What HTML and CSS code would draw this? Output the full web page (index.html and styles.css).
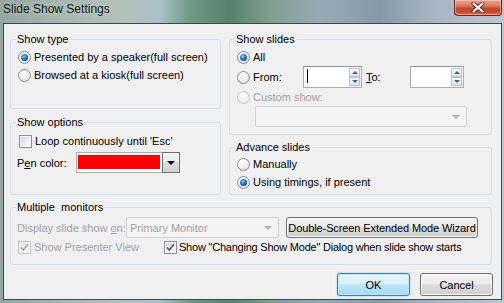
FILE: index.html
```html
<!DOCTYPE html>
<html lang="en">
<head>
    <meta charset="UTF-8">
    <title>Slide Show Settings</title>
    <link rel="stylesheet" href="styles.css">
</head>
<body>
    <div class="window">
        <div class="titlebar">
            <span class="title">Slide Show Settings</span>
            <span class="close-btn">
                <svg width="16" height="11" viewBox="0 0 16 11">
                    <path d="M3.5 1.5 L12.5 9.5 M12.5 1.5 L3.5 9.5" stroke="#5a2a22" stroke-width="4" stroke-linecap="round" fill="none"/>
                    <path d="M3.5 1.5 L12.5 9.5 M12.5 1.5 L3.5 9.5" stroke="#ffffff" stroke-width="2.2" stroke-linecap="round" fill="none"/>
                </svg>
            </span>
        </div>

        <div class="client">
            <div class="columns">
                <div class="col">
                    <fieldset class="group show-type">
                        <legend>Show type</legend>
                        <div class="opt"><span class="radio on"></span>Presented by a speaker(full screen)</div>
                        <div class="opt"><span class="radio"></span>Browsed at a kiosk(full screen)</div>
                    </fieldset>

                    <fieldset class="group show-options">
                        <legend>Show options</legend>
                        <div class="opt"><span class="check"></span>Loop continuously until 'Esc'</div>
                        <div class="opt pen-row">
                            <span class="pen-label">P<u>e</u>n color:</span>
                            <span class="color-pick">
                                <span class="swatch"></span>
                                <span class="drop-btn"><span class="tri-black"></span></span>
                            </span>
                        </div>
                    </fieldset>
                </div>

                <div class="col">
                    <fieldset class="group show-slides">
                        <legend>Show slides</legend>
                        <div class="opt"><span class="radio on"></span>All</div>
                        <div class="opt from-row">
                            <span class="radio"></span>
                            <span class="from-label">From:</span>
                            <span class="spin spin-from">
                                <span class="spin-field"><span class="caret"></span></span>
                                <span class="spin-btns">
                                    <span class="spin-btn"><span class="tri-up"></span></span>
                                    <span class="spin-btn"><span class="tri-down"></span></span>
                                </span>
                            </span>
                            <span class="to-label"><u>T</u>o:</span>
                            <span class="spin spin-to">
                                <span class="spin-field"></span>
                                <span class="spin-btns">
                                    <span class="spin-btn"><span class="tri-up"></span></span>
                                    <span class="spin-btn"><span class="tri-down"></span></span>
                                </span>
                            </span>
                        </div>
                        <div class="opt disabled"><span class="radio off"></span>Custom show:</div>
                        <div class="combo custom-combo"><span></span><span class="tri-gray"></span></div>
                    </fieldset>

                    <fieldset class="group advance">
                        <legend>Advance slides</legend>
                        <div class="opt"><span class="radio"></span>Manually</div>
                        <div class="opt"><span class="radio on"></span>Using timings, if present</div>
                    </fieldset>
                </div>
            </div>

            <fieldset class="group monitors">
                <legend>Multiple&nbsp; monitors</legend>
                <div class="opt monitor-row">
                    <span class="display-label disabled">Display slide show <u>o</u>n:</span>
                    <span class="combo monitor-combo"><span>Primary Monitor</span><span class="tri-gray"></span></span>
                    <span class="btn wizard-btn">Double-Screen Extended Mode Wizard</span>
                </div>
                <div class="opt">
                    <span class="presenter disabled">
                        <span class="check off">
                            <svg width="11" height="11" viewBox="0 0 11 11"><path d="M2 5.5 L4.3 8 L9 2.3" stroke="#a6a6a6" stroke-width="1.7" fill="none"/></svg>
                        </span>
                        Show Presenter View
                    </span>
                    <span class="check">
                        <svg width="11" height="11" viewBox="0 0 11 11"><path d="M2 5.5 L4.3 8 L9 2.3" stroke="#3e5a9c" stroke-width="1.7" fill="none"/></svg>
                    </span>
                    <span class="mode-text">Show "Changing Show Mode" Dialog when slide show starts</span>
                </div>
            </fieldset>

            <div class="actions">
                <span class="btn btn-default">OK</span>
                <span class="btn">Cancel</span>
            </div>
        </div>
    </div>
</body>
</html>
```

FILE: styles.css
```css
* {
    box-sizing: border-box;
}

body {
    margin: 0;
    font-family: "Liberation Sans", Arial, sans-serif;
    font-size: 11px;
    color: #000;
    overflow: hidden;
}

.window {
    width: 504px;
    height: 303px;
    display: flex;
    flex-direction: column;
    padding: 0 2px 3px 3px;
    background: linear-gradient(90deg, #93a69f 0px, #a7b6af 60px, #b3c0b9 120px, #a9c0c8 160px, #6f9a82 190px, #57826b 230px, #7f9e8d 270px, #98aab6 320px, #8797a8 380px, #a6b4c2 430px, #b2bec9 470px, #bcc6cf 504px);
}

.titlebar {
    height: 23px;
    flex: none;
    display: flex;
    justify-content: space-between;
    align-items: flex-start;
}

.title {
    font-size: 12px;
    line-height: 15px;
    padding-top: 2px;
    color: #0c1410;
    text-shadow: 0 0 6px rgba(255, 255, 255, 0.6);
}

.close-btn {
    width: 48px;
    height: 16px;
    border: 1px solid #6a2a20;
    border-top: none;
    border-radius: 0 0 4px 4px;
    background: linear-gradient(#e9a892 0%, #d77a62 40%, #c8472a 55%, #c9492b 80%, #d9735a 100%);
    box-shadow: inset 0 0 0 1px rgba(255, 210, 190, 0.5);
    display: flex;
    align-items: center;
    justify-content: center;
}

.client {
    flex: 1;
    border: 1px solid #3b4a52;
    background: #f0f0f0;
    padding: 8px 9px 0 6px;
    display: flex;
    flex-direction: column;
}

.columns {
    display: grid;
    grid-template-columns: 211px 263px;
    column-gap: 8px;
}

.col {
    display: flex;
    flex-direction: column;
}

.group {
    margin: 0;
    min-width: 0;
    border: 1px solid #d5dfe5;
    border-radius: 3px;
    padding: 0 7px;
}

.group legend {
    font-size: 11px;
    line-height: 15px;
    padding: 0 1px;
    margin-left: -2px;
}

.show-type {
    height: 77px;
    padding-top: 1px;
}

.show-options {
    height: 80px;
    margin-top: 6px;
    padding-top: 2px;
}

.show-slides {
    height: 103px;
    padding-top: 1px;
}

.advance {
    height: 55px;
    margin-top: 5px;
}

.monitors {
    height: 65px;
    margin-top: 5px;
    padding-top: 2px;
}

.opt {
    display: flex;
    align-items: center;
    height: 18px;
    white-space: nowrap;
}

.disabled {
    color: #a3a3a3;
}

/* radio buttons */
.radio {
    flex: none;
    position: relative;
    width: 13px;
    height: 13px;
    margin-right: 3px;
    border-radius: 50%;
    border: 1px solid #8c8e90;
    background: radial-gradient(circle at 35% 30%, #ffffff 0%, #f1f1f1 45%, #d2d2d2 100%);
}

.radio.on::after {
    content: "";
    position: absolute;
    left: 2px;
    top: 2px;
    width: 7px;
    height: 7px;
    border-radius: 50%;
    background: radial-gradient(circle at 40% 35%, #8fd0f7 0%, #2a86cc 35%, #14568f 70%, #0c3a66 100%);
}

.radio.off {
    border-color: #c6c7c8;
    background: radial-gradient(circle at 35% 30%, #ffffff 0%, #f4f4f4 50%, #e6e6e6 100%);
}

/* checkboxes */
.check {
    flex: none;
    width: 13px;
    height: 13px;
    margin: 0 3px 0 1px;
    border: 1px solid #8e8f8f;
    background: linear-gradient(135deg, #cfd3d8 0%, #eceef0 55%, #fbfbfb 100%);
    box-shadow: inset 0 0 0 1px #f4f4f4;
    display: flex;
    align-items: center;
    justify-content: center;
}

.check.off {
    border-color: #c4c4c4;
    background: linear-gradient(135deg, #e6e6e6, #f8f8f8);
}

/* show options */
.pen-row {
    height: 21px;
    margin-top: 2px;
}

.pen-label {
    width: 58px;
    margin-left: -1px;
}

.color-pick {
    display: flex;
    width: 104px;
    height: 21px;
    margin-left: 1px;
    border: 1px solid #abadb3;
    background: #fff;
}

.swatch {
    width: 82px;
    margin: 2px 0 3px 1px;
    background: #ff0000;
}

.drop-btn {
    width: 18px;
    margin: -1px -1px -1px auto;
    border: 1px solid #707070;
    background: linear-gradient(#f4f4f4 0%, #ebebeb 50%, #dedede 50%, #d0d0d0 100%);
    display: flex;
    align-items: center;
    justify-content: center;
}

.tri-black {
    border-left: 4px solid transparent;
    border-right: 4px solid transparent;
    border-top: 4px solid #000;
}

/* show slides */
.from-row {
    height: 22px;
}

.from-label {
    width: 50px;
}

.to-label {
    width: 44px;
    margin-left: 4px;
}

.spin {
    display: flex;
    height: 22px;
    border: 1px solid #abadb3;
    border-top-color: #8f9297;
    background: #fff;
}

.spin-from {
    width: 59px;
}

.spin-to {
    width: 54px;
}

.spin-field {
    flex: 1;
}

.caret {
    display: block;
    width: 1px;
    height: 14px;
    margin: 2px 0 0 3px;
    background: #000;
}

.spin-btns {
    width: 12px;
    padding: 1px 1px 1px 0;
    display: flex;
    flex-direction: column;
}

.spin-btn {
    flex: 1;
    border: 1px solid #b9c3cf;
    background: linear-gradient(#f6f9fc, #dce4ec);
    display: flex;
    align-items: center;
    justify-content: center;
}

.tri-up {
    border-left: 3px solid transparent;
    border-right: 3px solid transparent;
    border-bottom: 3px solid #4b6090;
}

.tri-down {
    border-left: 3px solid transparent;
    border-right: 3px solid transparent;
    border-top: 3px solid #4b6090;
}

.combo {
    display: flex;
    align-items: center;
    justify-content: space-between;
    height: 21px;
    padding: 0 6px 0 3px;
    border: 1px solid #cfd2d4;
    border-radius: 2px;
    background: #f4f4f4;
    color: #a3a3a3;
}

.tri-gray {
    border-left: 4px solid transparent;
    border-right: 4px solid transparent;
    border-top: 4px solid #b4b4b4;
}

.custom-combo {
    width: 212px;
    margin-left: 18px;
}

/* multiple monitors */
.monitor-row {
    height: 21px;
}

.display-label {
    width: 109px;
    margin-left: -1px;
}

.monitor-combo {
    width: 153px;
}

.wizard-btn {
    width: 192px;
    height: 21px;
    margin-left: 7px;
    letter-spacing: -0.1px;
}

.presenter {
    display: flex;
    align-items: center;
    width: 145px;
}

.opt .presenter .check {
    margin-left: 0;
}

.mode-text {
    margin-left: -1px;
    letter-spacing: -0.22px;
}

/* buttons */
.btn {
    display: flex;
    align-items: center;
    justify-content: center;
    border: 1px solid #707070;
    border-radius: 3px;
    background: linear-gradient(#f2f2f2 0%, #ebebeb 50%, #dddddd 50%, #cfcfcf 100%);
    box-shadow: inset 0 0 0 1px #fbfbfb;
    white-space: nowrap;
}

.actions {
    display: flex;
    justify-content: flex-end;
    gap: 10px;
    margin-top: 8px;
    margin-right: -1px;
}

.actions .btn {
    width: 73px;
    height: 23px;
}

.btn-default {
    border-color: #3c7fb1;
    background: linear-gradient(#eaf6fd 0%, #d9f0fc 50%, #bee6fd 50%, #a7d9f5 100%);
    box-shadow: inset 0 0 0 1px #c5e7f8, 0 0 2px rgba(60, 160, 220, 0.6);
}
```
